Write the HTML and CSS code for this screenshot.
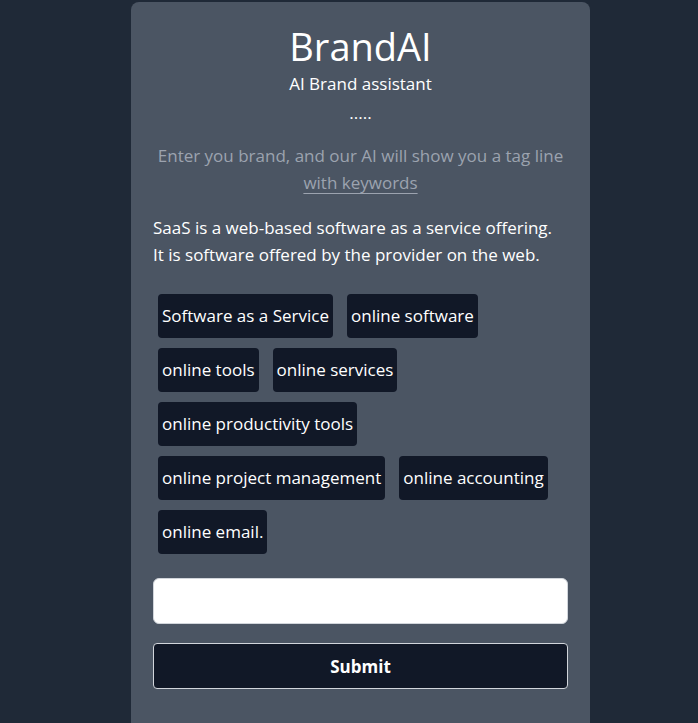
FILE: index.html
```html
<!DOCTYPE html>
<html>
<head>
<meta charset="utf-8">
<link rel="stylesheet" href="styles.css">
</head>
<body>
<main class="card">
  <h1 class="title">BrandAI</h1>
  <p class="subtitle">AI Brand assistant</p>
  <p class="dots">.....</p>
  <p class="intro">Enter you brand, and our AI will show you a tag line <span class="link">with keywords</span></p>
  <p class="result">SaaS is a web-based software as a service offering. It is software offered by the provider on the web.</p>
  <div class="tags">
    <span class="tag">Software as a Service</span>
    <span class="tag">online software</span>
    <span class="tag">online tools</span>
    <span class="tag">online services</span>
    <span class="tag">online productivity tools</span>
    <span class="tag">online project management</span>
    <span class="tag">online accounting</span>
    <span class="tag">online email.</span>
  </div>
  <input class="field" type="text">
  <button class="submit">Submit</button>
</main>
</body>
</html>
```
FILE: styles.css
```css
html, body {
  margin: 0;
  padding: 0;
  background: #1f2937;
  height: 100%;
}
body {
  font-family: "Open Sans", "Noto Sans", sans-serif;
  color: #fff;
  overflow: hidden;
}
.card {
  box-sizing: border-box;
  width: 459px;
  margin: 2px 0 0 131px;
  min-height: 730px;
  background: #4b5563;
  border-radius: 8px 8px 0 0;
  padding: 18px 22px 24px;
  display: flex;
  flex-direction: column;
}
.title {
  margin: 0;
  text-align: center;
  font-weight: 400;
  font-size: 38px;
  line-height: 52px;
}
.subtitle {
  margin: 0;
  text-align: center;
  font-size: 17px;
  line-height: 23px;
}
.dots {
  margin: 5px 0 0;
  text-align: center;
  font-size: 17px;
  line-height: 26px;
}
.intro {
  margin: 16px 0 0;
  text-align: center;
  color: #9ca3af;
  font-size: 17px;
  line-height: 27px;
}
.link {
  text-decoration: underline;
  text-underline-offset: 4px;
}
.result {
  margin: 18px 0 0;
  max-width: 402px;
  font-size: 17px;
  line-height: 27px;
}
.tags {
  display: flex;
  flex-wrap: wrap;
  column-gap: 14px;
  row-gap: 10px;
  padding: 0 5px;
  margin-top: 26px;
}
.tag {
  background: #111827;
  border-radius: 4px;
  padding: 8px 4px 9px;
  font-size: 17px;
  line-height: 27px;
}
.field {
  margin-top: 24px;
  height: 46px;
  box-sizing: border-box;
  border: 1px solid #d1d5db;
  border-radius: 6px;
  background: #fff;
  width: 100%;
}
.submit {
  margin-top: 19px;
  height: 46px;
  width: 100%;
  box-sizing: border-box;
  border: 1px solid #d1d5db;
  border-radius: 4px;
  background: #111827;
  color: #fff;
  font-family: "Open Sans", "Noto Sans", sans-serif;
  font-weight: 700;
  font-size: 17px;
}
```
